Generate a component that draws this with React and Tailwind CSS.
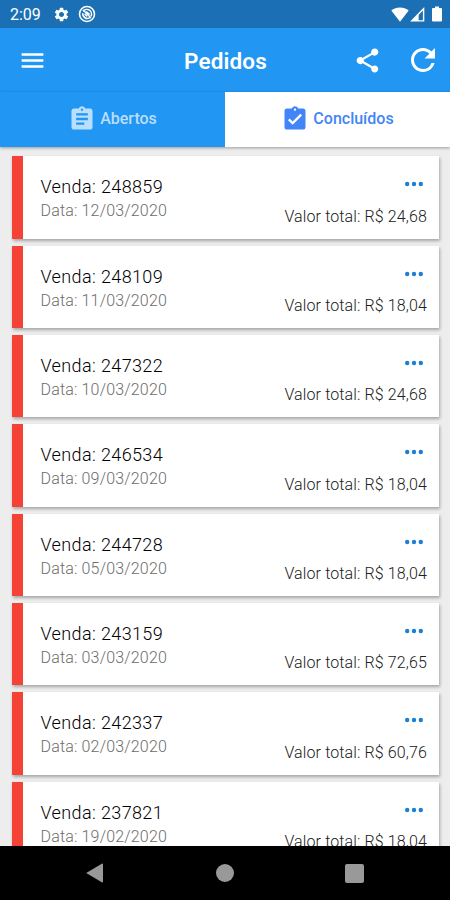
import { MdAssignment, MdAssignmentTurnedIn, MdMenu, MdRefresh, MdSettings, MdShare } from 'react-icons/md'

const pedidos = [
    { venda: '248859', data: '12/03/2020', total: '24,68' },
    { venda: '248109', data: '11/03/2020', total: '18,04' },
    { venda: '247322', data: '10/03/2020', total: '24,68' },
    { venda: '246534', data: '09/03/2020', total: '18,04' },
    { venda: '244728', data: '05/03/2020', total: '18,04' },
    { venda: '243159', data: '03/03/2020', total: '72,65' },
    { venda: '242337', data: '02/03/2020', total: '60,76' },
    { venda: '237821', data: '19/02/2020', total: '18,04' },
]

const StatusBar = () => (
    <div className="flex h-7 shrink-0 items-center bg-[#1a6fb5] pl-[10px] pr-2 text-white">
        <span className="w-[43px] pt-[2px] text-[16px] leading-none">2:09</span>
        <MdSettings className="h-[17px] w-[17px]" />
        <svg viewBox="0 0 18 18" className="ml-[8px] h-[18px] w-[18px]" fill="none" stroke="currentColor">
            <circle cx="9" cy="9" r="7.5" strokeWidth="1.6" />
            <path d="M5.2 6.3a4.6 4.6 0 0 1 7.7 5M12 12.6a4.6 4.6 0 0 1-7.2-4.4" strokeWidth="1.5" />
            <path d="M5 5l8 8M8.2 6.4l3.6 3.2M6.6 9l2.6 2.4" strokeWidth="1.4" />
        </svg>
        <div className="ml-auto flex items-center">
            <svg viewBox="0 0 18 15" className="h-[15px] w-[18px]" fill="currentColor">
                <path d="M0.3 3.6C5 -0.7 13 -0.7 17.7 3.6L9 14.8z" />
            </svg>
            <svg viewBox="0 0 15 15" className="ml-px h-[15px] w-[15px]" fill="none" stroke="currentColor">
                <path d="M13.6 1.8v12.1H1.8z" strokeWidth="1.4" />
                <path d="M8.6 7v7H2z" fill="currentColor" stroke="none" />
            </svg>
            <svg viewBox="0 0 10 16" className="ml-[7px] h-4 w-[10px]" fill="currentColor">
                <path d="M3 0.5h4V2h2a1 1 0 0 1 1 1v11.5a1 1 0 0 1-1 1H1a1 1 0 0 1-1-1V3a1 1 0 0 1 1-1h2z" />
            </svg>
        </div>
    </div>
)

const Header = () => (
    <header className="flex h-16 shrink-0 items-center justify-between bg-[#2196f3] pl-[18px] pr-[9px] text-white">
        <div className="w-[80px]">
            <MdMenu className="h-[29px] w-[29px]" />
        </div>
        <h1 className="pt-[2px] text-[22.5px] font-semibold leading-none tracking-[0.15px]">Pedidos</h1>
        <div className="flex w-[88px] items-center justify-between">
            <MdShare className="h-[29px] w-[29px]" />
            <MdRefresh className="h-[36px] w-[36px]" />
        </div>
    </header>
)

const Tabs = () => (
    <div className="relative z-10 grid h-[55px] shrink-0 grid-cols-2 text-[16px] font-medium shadow-[0_1px_3px_rgba(0,0,0,0.35)]">
        <button className="flex items-center justify-center gap-[4px] bg-[#2196f3] pb-[2px] text-[#b9dffc]">
            <MdAssignment className="h-7 w-7" />
            <span>Abertos</span>
        </button>
        <button className="flex items-center justify-center gap-[4px] bg-white pb-[2px] text-[#4285f8]">
            <MdAssignmentTurnedIn className="h-7 w-7" />
            <span>Concluídos</span>
        </button>
    </div>
)

const PedidoCard = ({ pedido }) => (
    <div className="flex h-[82.4px] shrink-0 justify-between border-l-[11.5px] border-[#f44336] bg-white pl-[17.5px] pr-[12px] shadow-[1px_2px_3px_rgba(0,0,0,0.3)]">
        <div className="pt-[19px]">
            <p className="text-[18px] font-light leading-6 tracking-[0.38px] text-black">Venda: {pedido.venda}</p>
            <p className="text-[16px] font-light leading-6 tracking-[0.17px] text-[#6c6c6c]">Data: {pedido.data}</p>
        </div>
        <div className="flex flex-col items-end">
            <svg viewBox="0 0 20 6" className="mr-[3.5px] mt-[25px] h-[6px] w-5" fill="#1c7fd6">
                <circle cx="3.2" cy="3" r="2.2" />
                <circle cx="10" cy="3" r="2.2" />
                <circle cx="16.8" cy="3" r="2.2" />
            </svg>
            <p className="mt-[17.5px] text-[16px] font-light leading-6 tracking-[0.12px] text-[#202020]">Valor total: R$ {pedido.total}</p>
        </div>
    </div>
)

const NavBar = () => (
    <div className="flex h-[54px] shrink-0 items-center justify-between bg-black pl-[85px] pr-[86px] text-[#999999]">
        <svg viewBox="0 0 20 20" className="h-5 w-5" fill="currentColor">
            <path d="M1.2 10L16.8 0.7Q18 0.2 18 1.4v17.2Q18 19.8 16.8 19.3z" />
        </svg>
        <div className="h-[18px] w-[18px] rounded-full bg-[#999999]" />
        <div className="h-[19px] w-[19px] rounded-[2px] bg-[#999999]" />
    </div>
)

const App = () => {
    return (
        <div className="flex h-[900px] w-[450px] flex-col overflow-hidden bg-[#ededed] font-['Roboto',sans-serif]">
            <StatusBar />
            <Header />
            <Tabs />
            <main className="flex min-h-0 flex-1 flex-col gap-[6.95px] overflow-hidden pl-[12px] pr-[11px] pt-[9.3px]">
                {pedidos.map((pedido) => (
                    <PedidoCard key={pedido.venda} pedido={pedido} />
                ))}
            </main>
            <NavBar />
        </div>
    )
}

export default App
